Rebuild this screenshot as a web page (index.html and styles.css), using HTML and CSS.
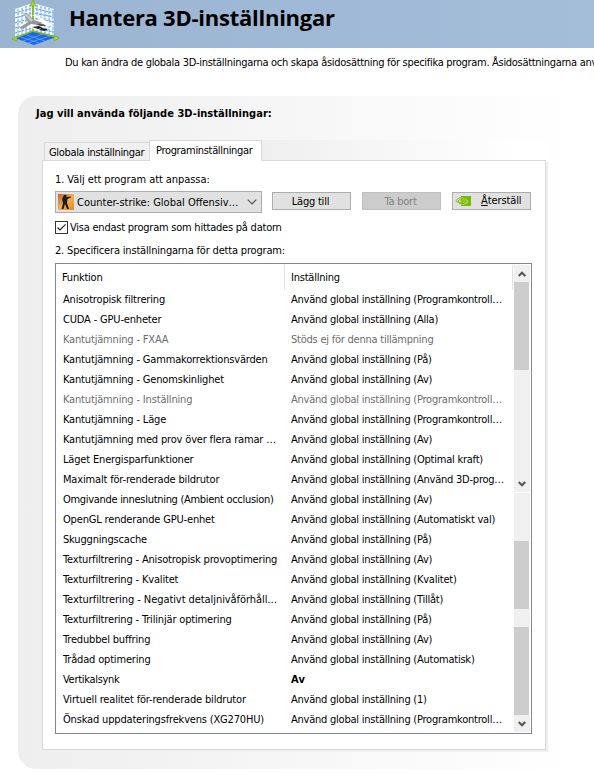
FILE: index.html
```html
<!DOCTYPE html>
<html lang="sv">
<head>
<meta charset="utf-8">
<title>Hantera 3D-inställningar</title>
<link rel="stylesheet" href="styles.css">
</head>
<body>
<header class="banner">
  <svg class="banner-icon" width="48" height="46" viewBox="0 0 48 46">
    <path d="M3 9 21 3V33L3 38Z" fill="#f5faff"/>
    <path d="M21 3 42 9V36L21 33Z" fill="#f0f7ff"/>
    <path d="M3 13 21 8 42 13M3 18 21 13 42 17M3 23 21 18 42 22M3 28 21 23 42 27M3 33 21 28 42 32M6 9V37M10 8V36M14 6V35M18 5V34M25 5V34M29 6V34M33 7V35M37 8V36M41 10V36" fill="none" stroke="#5b9cf5" stroke-width="1" stroke-dasharray="2.500 1"/>
    <path d="M3 38 21 31 44 37 22 45Z" fill="#1768ef"/>
    <path d="M9 37 27 43M15 35 33 41M11 41 31 34M16 43 38 36" stroke="#7db6ff" stroke-width=".6" fill="none"/>
    <path d="M21 3V31L44 37M21 31 3 38" fill="none" stroke="#85b91c" stroke-width="1.800"/>
    <path d="M21 0 24 6H18ZM0 39 5 36 5 41ZM47 38 42 35 42 41Z" fill="#a6d829" stroke="#6c9e16" stroke-width=".6"/>
    <path d="M20 15 26 16 34 21 40 24 42 27 35 26 25 25 34 29 24 30 17 27 9 28 7 25 16 22 13 15 20 20 28 20Z" fill="#fff"/>
    <path d="M11 13 15 13 22 20 31 23 26 25 19 24 11 29 7 28 16 22Z" fill="#94979a"/>
    <path d="M11 13 15 14 21 20 19 22Z" fill="#c6c8ca"/>
    <path d="M20 27 27 26 31 28 26 29ZM30 28 36 29 33 31 27 30Z" fill="#202326"/>
    <path d="M24 24Q32 23 34 26L28 26Z" fill="#55585b"/>
  </svg>
  <h1 class="banner-title">Hantera 3D-inställningar</h1>
</header>
<p class="intro">Du kan ändra de globala 3D-inställningarna och skapa åsidosättning för specifika program. Åsidosättningarna anv</p>

<main class="panel">
  <h2 class="panel-title">Jag vill använda följande 3D-inställningar:</h2>
  <nav class="tabs">
    <div class="tab">Globala inställningar</div>
    <div class="tab tab-active">Programinställningar</div>
  </nav>
  <section class="page">
    <p class="step">1. Välj ett program att anpassa:</p>
    <div class="controls">
      <div class="combo">
        <svg class="combo-icon" width="16" height="16" viewBox="0 0 16 16">
          <defs><linearGradient id="cs" x1="0" y1="0" x2="1" y2="1"><stop offset="0" stop-color="#b9652b"/><stop offset=".5" stop-color="#f3b14c"/><stop offset="1" stop-color="#e08a28"/></linearGradient></defs>
          <rect width="16" height="16" fill="url(#cs)"/>
          <path d="M6 1H8.500V3L13 2.500V3.500L9.500 5 9 9 11 15H9L7 10 5.500 15H3.500L5 9 4 5Z" fill="#1d1a1b"/>
        </svg>
        <span class="combo-text">Counter-strike: Global Offensiv…</span>
        <svg width="10" height="6" viewBox="0 0 10 6"><path d="M.8.7 5 4.900 9.200.7" fill="none" stroke="#505050" stroke-width="1.100"/></svg>
      </div>
      <div class="button">Lägg till</div>
      <div class="button button-off">Ta bort</div>
      <div class="button button-reset">
        <svg width="16" height="10" viewBox="0 0 16 10">
          <path d="M6 0H16V10H6V8.700Q10.500 9 13.500 5.500 10.500 1.500 6 1.300Z" fill="#76b900"/>
          <path d="M6 1.300Q10.500 1.500 13.500 5.500 10.500 9 6 8.700Z" fill="#9fce4f"/>
          <path d="M.7 4.800Q5-.3 9.500 2.500 12 5 9 7.500 4.500 9 .7 4.800ZM3 5Q5 2 8 3.800 9 6 7 6.800 4.500 7 3 5ZM5.200 5Q6 4 7 5" fill="none" stroke="#76b900" stroke-width=".9"/>
        </svg>
        <span class="reset-text"><u>Å</u>terställ</span>
      </div>
    </div>
    <div class="check">
      <svg width="13" height="13" viewBox="0 0 13 13"><rect x=".5" y=".5" width="12" height="12" fill="#fff" stroke="#333"/><path d="M2.500 6.500 5 9 10.500 3.300" fill="none" stroke="#222" stroke-width="1.200"/></svg>
      <span>Visa endast program som hittades på datorn</span>
    </div>
    <p class="step step-two">2. Specificera inställningarna för detta program:</p>

    <div class="list">
      <div class="grid">
        <div class="head"><span class="head-name">Funktion</span><span class="head-value">Inställning</span></div>
        <div class="row"><span>Anisotropisk filtrering</span><span>Använd global inställning (Programkontroll…</span></div>
        <div class="row"><span>CUDA - GPU-enheter</span><span>Använd global inställning (Alla)</span></div>
        <div class="row row-off"><span>Kantutjämning - FXAA</span><span>Stöds ej för denna tillämpning</span></div>
        <div class="row"><span>Kantutjämning - Gammakorrektionsvärden</span><span>Använd global inställning (På)</span></div>
        <div class="row"><span>Kantutjämning - Genomskinlighet</span><span>Använd global inställning (Av)</span></div>
        <div class="row row-off"><span>Kantutjämning - Inställning</span><span>Använd global inställning (Programkontroll…</span></div>
        <div class="row"><span>Kantutjämning - Läge</span><span>Använd global inställning (Programkontroll…</span></div>
        <div class="row"><span>Kantutjämning med prov över flera ramar …</span><span>Använd global inställning (Av)</span></div>
        <div class="row"><span>Läget Energisparfunktioner</span><span>Använd global inställning (Optimal kraft)</span></div>
        <div class="row"><span>Maximalt för-renderade bildrutor</span><span>Använd global inställning (Använd 3D-prog…</span></div>
        <div class="row tight"><span>Omgivande inneslutning (Ambient occlusion)</span><span>Använd global inställning (Av)</span></div>
        <div class="row"><span>OpenGL renderande GPU-enhet</span><span>Använd global inställning (Automatiskt val)</span></div>
        <div class="row"><span>Skuggningscache</span><span>Använd global inställning (På)</span></div>
        <div class="row"><span>Texturfiltrering - Anisotropisk provoptimering</span><span>Använd global inställning (Av)</span></div>
        <div class="row"><span>Texturfiltrering - Kvalitet</span><span>Använd global inställning (Kvalitet)</span></div>
        <div class="row wide"><span>Texturfiltrering - Negativt detaljnivåförhåll…</span><span>Använd global inställning (Tillåt)</span></div>
        <div class="row"><span>Texturfiltrering - Trilinjär optimering</span><span>Använd global inställning (På)</span></div>
        <div class="row"><span>Tredubbel buffring</span><span>Använd global inställning (Av)</span></div>
        <div class="row"><span>Trådad optimering</span><span>Använd global inställning (Automatisk)</span></div>
        <div class="row tight"><span>Vertikalsynk</span><b>Av</b></div>
        <div class="row"><span>Virtuell realitet för-renderade bildrutor</span><span>Använd global inställning (1)</span></div>
        <div class="row"><span>Önskad uppdateringsfrekvens (XG270HU)</span><span>Använd global inställning (Programkontroll…</span></div>
      </div>
      <div class="scroll">
        <div class="arrow"><svg width="8" height="6" viewBox="0 0 8 6"><path d="M.7 5 4 1.700 7.300 5" fill="none" stroke="#555" stroke-width="2"/></svg></div>
        <div class="thumb thumb-a"></div>
        <div class="gap gap-a"></div>
        <div class="arrow"><svg width="8" height="6" viewBox="0 0 8 6"><path d="M.7 1 4 4.300 7.300 1" fill="none" stroke="#555" stroke-width="2"/></svg></div>
        <div class="seam"></div>
        <div class="gap gap-b"></div>
        <div class="thumb thumb-b"></div>
        <div class="gap gap-c"></div>
        <div class="thumb thumb-c"></div>
        <div class="arrow"><svg width="8" height="6" viewBox="0 0 8 6"><path d="M.7 1 4 4.300 7.300 1" fill="none" stroke="#555" stroke-width="2"/></svg></div>
      </div>
    </div>
  </section>
</main>
</body>
</html>
```
FILE: styles.css
```css
* { box-sizing: border-box; }
html, body { margin: 0; overflow: hidden; }
body {
  width: 594px;
  height: 773px;
  background: #fff;
  color: #000;
  font: 11px/20px "DejaVu Sans Condensed", "DejaVu Sans", sans-serif;
  font-stretch: condensed;
  letter-spacing: -0.23px;
  white-space: nowrap;
}
h1, h2, p { margin: 0; }
svg { display: block; flex: none; }

.banner {
  display: flex;
  height: 48px;
  padding-left: 12px;
  background: linear-gradient(90deg, #9bb4d2, #a4bdd9);
}
.banner-title {
  margin-left: 9px;
  font: bold 22px/35px "Open Sans", sans-serif;
  letter-spacing: -0.25px;
}
.intro { height: 48px; padding: 5px 0 0 65px; letter-spacing: -0.3px; }

.panel {
  height: 673px;
  margin-left: 18px;
  padding: 7px 0 0 24px;
  border-radius: 18px 0 0 18px;
  background: linear-gradient(90deg, #eee, #fff 96%);
}
.panel-title {
  height: 37px;
  margin-left: -6px;
  font-size: 11px;
  line-height: 21px;
  letter-spacing: 0.02px;
}

.tabs {
  display: flex;
  align-items: flex-end;
  width: 506px;
  height: 20px;
  padding-left: 2px;
  background: linear-gradient(90deg, #eee 40%, #fff 95%);
  letter-spacing: -0.33px;
}
.tab {
  width: 105px;
  height: 18px;
  padding-left: 4px;
  border: 1px solid #d9d9d9;
  border-width: 1px 0 0 1px;
  background: #f0f0f0;
  line-height: 19px;
}
.tab-active {
  width: 113px;
  height: 21px;
  margin-bottom: -1px;
  padding-left: 6px;
  border-right-width: 1px;
  background: #fff;
  line-height: 19px;
  z-index: 1;
}

.page {
  width: 504px;
  height: 590px;
  padding: 8px 13px 0 12px;
  border: 1px solid #d9d9d9;
  box-shadow: 2px 2px #f0f0f0;
  background: #fff;
}
.step { height: 22px; line-height: 21px; letter-spacing: -0.07px; }
.controls { display: flex; gap: 11px; height: 30px; }
.combo {
  display: flex;
  align-items: center;
  width: 207px;
  height: 22px;
  margin-right: -1px;
  padding: 0 4px 0 2px;
  border: 1px solid #adadad;
  background: #e1e1e1;
}
.combo-text { flex: 1; margin-left: 3px; padding-top: 1px; letter-spacing: 0; }
.button {
  width: 79px;
  height: 18px;
  margin-top: 1px;
  border: 1px solid #adadad;
  background: #e1e1e1;
  line-height: 17px;
  text-align: center;
}
.button:not(.button-reset) { padding-right: 2px; }
.button-off { border-color: #bfbfbf; background: #ccc; color: #838383; }
.button-reset { display: flex; padding: 3px 0 0 2px; }
.reset-text { margin: -4px 0 0 10px; letter-spacing: -0.1px; }
.check { display: flex; align-items: center; gap: 2px; height: 13px; }
.check span { padding-top: 1px; }
.step-two { height: 29px; padding-top: 6px; letter-spacing: -0.18px; }

.list {
  display: flex;
  width: 477px;
  height: 471px;
  padding-top: 1px;
  border: 1px solid #828790;
}
.grid { width: 457px; }
.head {
  display: grid;
  grid-template-columns: 229px 228px;
  height: 24px;
  margin-bottom: 1px;
  line-height: 25px;
}
.head-name { padding-left: 6px; border-right: 1px solid #e2e2e2; }
.head-value { padding-left: 6px; border-right: 1px solid #e2e2e2; }
.row {
  display: grid;
  grid-template-columns: 228px 222px;
  height: 20px;
  padding-left: 7px;
}
.row span:first-child { letter-spacing: -0.17px; }
.row.tight span:first-child { letter-spacing: -0.3px; }
.row.wide span:first-child { letter-spacing: -0.07px; }
.row b { letter-spacing: 0.3px; }
.row-off { color: #6d6d6d; }

.scroll { width: 16px; margin-left: 1px; }
.arrow {
  display: flex;
  align-items: center;
  justify-content: center;
  height: 17px;
  background: #f0f0f0;
}
.thumb { width: 15px; background: #cdcdcd; }
.thumb-a { height: 88px; }
.thumb-b { height: 68px; }
.thumb-c { height: 88px; }
.gap { background: #f0f0f0; }
.gap-a { height: 105px; }
.gap-b { height: 48px; }
.gap-c { height: 18px; }
.seam { height: 1px; background: #fff; }
```
